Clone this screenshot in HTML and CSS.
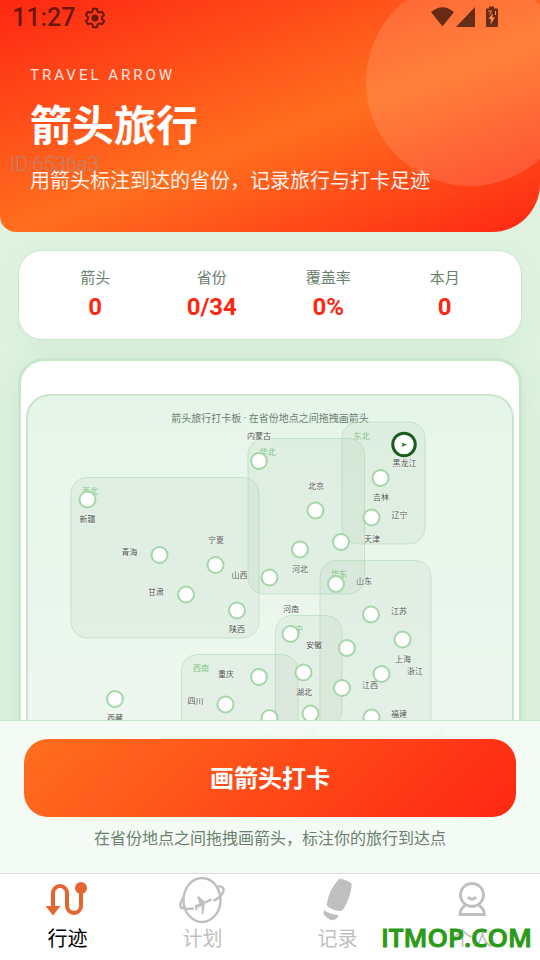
FILE: index.html
```html
<!DOCTYPE html>
<html lang="zh-CN">
<head>
<meta charset="utf-8">
<meta name="viewport" content="width=device-width, initial-scale=1">
<title>箭头旅行</title>
<link rel="stylesheet" href="styles.css">
</head>
<body>
<div class="app">
  <div class="status">
    <span class="clock">11:27</span>
    <svg class="gear" viewBox="0 0 24 24" width="24" height="24" aria-hidden="true"><path d="M10 2.800h4l.6 2.800 1.800 1 2.700-.9 2 3.400-2.100 1.900v2l2.100 1.900-2 3.400-2.700-.9-1.800 1-.6 2.800h-4l-.6-2.800-1.800-1-2.700.9-2-3.400L5 13v-2L2.900 9.100l2-3.400 2.700.9 1.800-1z" fill="none" stroke="currentColor" stroke-width="2" stroke-linejoin="round"/><circle cx="12" cy="12" r="3.500" fill="currentColor"/></svg>
    <svg class="signals" viewBox="0 0 70 22" width="70" height="22" aria-hidden="true"><path d="M0 5Q11.500-4.500 23 5L11.500 19.500z M44 0V20H25z" fill="currentColor"/><path d="M58-.5h5v2h3q1 0 1 1V19q0 1-1 1H56q-1 0-1-1V2.500q0-1 1-1h2z" fill="currentColor"/><path d="M61.500 6l-4 6h2.500l-.5 5.500 4.500-7h-2.500z" fill="#ff8a4a"/><path d="M57 4h3.500l-2 3.500M64.500 4v4" fill="none" stroke="#ff8a4a"/></svg>
  </div>
  <div class="device-id">ID:6536a3</div>

  <main class="scroll">
    <header class="hero">
      <div class="eyebrow">TRAVEL ARROW</div>
      <h1>箭头旅行</h1>
      <p>用箭头标注到达的省份，记录旅行与打卡足迹</p>
    </header>

    <dl class="stats">
      <div><dt>箭头</dt><dd>0</dd></div>
      <div><dt>省份</dt><dd>0/34</dd></div>
      <div><dt>覆盖率</dt><dd>0%</dd></div>
      <div><dt>本月</dt><dd>0</dd></div>
    </dl>

    <section class="map-card">
      <div class="board">
        <svg viewBox="28 396 484 520">
          <text class="caption" x="270" y="422">箭头旅行打卡板 · 在省份地点之间拖拽画箭头</text>
          <g class="regions">
            <rect x="71" y="477.500" width="188" height="160.500" rx="16"/>
            <rect x="248" y="438.500" width="116.500" height="155.500" rx="16"/>
            <rect x="342" y="422" width="83" height="122" rx="16"/>
            <rect x="320" y="560.500" width="111" height="200" rx="16"/>
            <rect x="275.500" y="615.500" width="66.500" height="111" rx="16"/>
            <rect x="181.500" y="654.500" width="116.500" height="140" rx="16"/>
          </g>
          <g class="region-names">
            <text x="90" y="494">西北</text><text x="267.500" y="455">华北</text><text x="361.500" y="439">东北</text>
            <text x="339" y="577">华东</text><text x="295" y="632">华中</text><text x="201" y="671">西南</text>
          </g>
          <g class="nodes">
            <circle cx="259" cy="461" r="8"/><circle cx="87.500" cy="499.500" r="8"/><circle cx="159.500" cy="555" r="8"/>
            <circle cx="215.500" cy="565" r="8"/><circle cx="186" cy="594.500" r="8"/><circle cx="237" cy="610.500" r="8"/>
            <circle cx="269.500" cy="577.500" r="8"/><circle cx="300" cy="549.500" r="8"/><circle cx="315.500" cy="510.500" r="8"/>
            <circle cx="341" cy="542" r="8"/><circle cx="371.500" cy="517.500" r="8"/><circle cx="380.500" cy="478" r="8"/>
            <circle cx="336" cy="584" r="8"/><circle cx="371" cy="614.500" r="8"/><circle cx="402.500" cy="639.500" r="8"/>
            <circle cx="381.500" cy="674" r="8"/><circle cx="347" cy="648" r="8"/><circle cx="290.500" cy="634" r="8"/>
            <circle cx="303.500" cy="672.500" r="8"/><circle cx="342" cy="688" r="8"/><circle cx="259" cy="677" r="8"/>
            <circle cx="225.500" cy="704.500" r="8"/><circle cx="115" cy="699" r="8"/><circle cx="269.500" cy="718" r="8"/>
            <circle cx="310.500" cy="713.500" r="8"/><circle cx="371.500" cy="717.500" r="8"/><circle cx="413" cy="738" r="8"/>
            <circle cx="340" cy="818" r="8"/><circle cx="305" cy="837" r="8"/>
          </g>
          <circle class="current" cx="404" cy="444.500" r="11.250"/>
          <path class="pointer" d="M401.500 442.500l5.500 2.200-5.500 2.200 1-2.200z"/>
          <g class="names">
            <text x="259" y="439">内蒙古</text><text x="87.500" y="522">新疆</text><text x="129.500" y="555">青海</text>
            <text x="216" y="543">宁夏</text><text x="156" y="595">甘肃</text><text x="237" y="632">陕西</text>
            <text x="239.500" y="578">山西</text><text x="300" y="572">河北</text><text x="316" y="489">北京</text>
            <text x="372" y="542">天津</text><text x="399.500" y="518">辽宁</text><text x="381" y="500">吉林</text>
            <text x="404.500" y="466">黑龙江</text><text x="364" y="584">山东</text><text x="399" y="614">江苏</text>
            <text x="403" y="662">上海</text><text x="415" y="674">浙江</text><text x="314" y="648">安徽</text>
            <text x="291" y="612">河南</text><text x="304" y="695">湖北</text><text x="370" y="688">江西</text>
            <text x="226" y="677">重庆</text><text x="195.500" y="704">四川</text><text x="115" y="721">西藏</text>
            <text x="270" y="740">贵州</text><text x="311" y="736">湖南</text><text x="399" y="717">福建</text>
            <text x="437" y="738">台湾</text>
          </g>
        </svg>
      </div>
    </section>
  </main>

  <section class="dock">
    <button type="button" class="draw">画箭头打卡</button>
    <p>在省份地点之间拖拽画箭头，标注你的旅行到达点</p>
  </section>

  <nav class="tabs">
    <a href="#track" class="active">
      <svg viewBox="0 0 48 48" width="48" height="48" aria-hidden="true"><path d="M9 30V17a7 7 0 0 1 14 0V30a7 7 0 0 0 14 0V10" fill="none" stroke="currentColor" stroke-width="4"/><circle cx="37" cy="12" r="6" fill="currentColor"/><path d="M1.500 30H16.500L9 39.500z" fill="currentColor"/></svg>
      <span>行迹</span>
    </a>
    <a href="#plan">
      <svg viewBox="0 0 48 48" width="48" height="48" aria-hidden="true"><g fill="none" stroke="currentColor" stroke-width="2.400"><ellipse cx="23" cy="24" rx="18.500" ry="22"/><path d="M5 21C1 26 0 31 3 32Q7 33.500 15 32.500M34.500 25Q42 21 44 16.500C46 11 42 9.500 38 11"/></g><path d="M17 29l4.500-1.500L19 21l2-.7 5.500 5.200 5-2.500q3-1 2.700.7-.3 1.200-2.500 2l-5 2L25.500 37.500l-2 .8.300-8.300-4.300 1.800-.3 2.500-1.500.5-1-5.300z" fill="currentColor" transform="translate(-1)"/></svg>
      <span>计划</span>
    </a>
    <a href="#notes">
      <svg viewBox="0 0 48 48" width="48" height="48" aria-hidden="true"><path d="M24.500 3.500Q25.500 2.500 27 2.800Q33 4 37 7Q38 8 37.500 11Q36 22 29.500 33Q28.500 35 26.500 35Q19 34.500 13.500 30.500Q12.500 29.500 13 27Q15 14 24.500 3.500zM10 34Q16 38.500 24.500 39L23 42Q20 45 16.500 44Q11.500 41.500 9.500 38z" fill="currentColor"/></svg>
      <span>记录</span>
    </a>
    <a href="#me">
      <svg viewBox="0 0 48 48" width="48" height="48" aria-hidden="true"><g fill="none" stroke="currentColor" stroke-width="2.800"><circle cx="23" cy="19" r="11.500"/><path d="M19 21q4 4.500 8 0"/><path d="M16 29.500Q11 33 11 38.500H35.500Q35.500 33 30 29.500"/></g></svg>
      <span>个人</span>
    </a>
    <div class="mark">ITMOP.COM</div>
  </nav>
</div>
</body>
</html>
```
FILE: styles.css
```css
* { box-sizing: border-box; }

body {
  margin: 0;
  font-family: Roboto, "Noto Sans CJK SC", sans-serif;
  background: #dff2e1;
}

.app {
  position: relative;
  display: grid;
  grid-template-rows: minmax(0, 1fr) auto;
  height: 100vh;
  overflow: hidden;
}

.status {
  position: absolute;
  z-index: 2;
  top: 0;
  left: 0;
  right: 0;
  display: flex;
  align-items: center;
  gap: 8px;
  height: 36px;
  padding: 0 39px 0 12px;
  color: rgba(30, 10, 5, .68);
}

.clock {
  font-size: 25px;
  line-height: 38px;
  font-weight: 500;
}

.signals {
  margin-left: auto;
  overflow: visible;
}

.device-id {
  position: absolute;
  z-index: 2;
  top: 152px;
  left: 10px;
  font-size: 20px;
  line-height: 24px;
  font-weight: 300;
  color: rgba(150, 150, 150, .7);
}

.scroll {
  grid-area: 1 / 1;
  overflow: hidden;
}

.hero {
  position: relative;
  overflow: hidden;
  padding: 64px 30px 35px;
  border-radius: 0 0 48px 16px;
  color: #fff;
  background: linear-gradient(160deg, #fe2712 0%, #ff6f1e 55%, #fe2712 100%);
}

.hero::after {
  content: "";
  position: absolute;
  top: -22px;
  right: -34px;
  width: 208px;
  height: 208px;
  border-radius: 50%;
  background: rgba(255, 255, 255, .13);
}

.eyebrow {
  font-size: 15px;
  line-height: 22px;
  letter-spacing: 3px;
  opacity: .85;
}

.hero h1 {
  margin: 10px 0 7px;
  font-size: 42px;
  line-height: 62px;
  font-weight: 700;
}

.hero p {
  margin: 0;
  font-size: 20px;
  line-height: 32px;
  opacity: .9;
}

.stats {
  display: grid;
  grid-template-columns: repeat(4, 1fr);
  margin: 18px 18px;
  padding: 15px 18px;
  border: 1px solid #c8e6c9;
  border-radius: 24px;
  background: #fff;
  text-align: center;
  box-shadow: 0 8px 24px rgba(76, 175, 80, .06);
}

.stats dt {
  font-size: 15px;
  line-height: 24px;
  color: #6b806d;
}

.stats dd {
  margin: 0;
  font-size: 24px;
  line-height: 34px;
  font-weight: 700;
  color: #fe2712;
}

.map-card {
  margin: 0 18px;
  padding: 33px 5px;
  border: 3px solid #c8e6c9;
  border-radius: 26px;
  background: #fff;
  box-shadow: 0 8px 32px rgba(76, 145, 80, .12);
}

.board {
  border: 2px solid #c8e6c9;
  border-radius: 24px;
  background: linear-gradient(#e6f5e9, #f1f8f2);
}

.board svg {
  display: block;
  width: 100%;
}

.board text {
  font-size: 8px;
  text-anchor: middle;
}

.board .caption {
  font-size: 10px;
  fill: #6b806d;
}

.regions rect {
  fill: rgba(90, 140, 90, .06);
  stroke: rgba(165, 214, 167, .5);
  stroke-width: 1;
}

.region-names { fill: #81c784; }

.nodes circle {
  fill: #fff;
  stroke: #a5d6a7;
  stroke-width: 2;
}

.current {
  fill: #fff;
  stroke: #1b5e20;
  stroke-width: 3;
}

.pointer { fill: #2e7d32; }

.names {
  fill: #4a544c;
  stroke: rgba(255, 255, 255, .7);
  stroke-width: 1;
  paint-order: stroke;
}

.dock {
  grid-area: 1 / 1;
  align-self: end;
  z-index: 1;
  padding: 18px 24px 20px;
  border-top: 1px solid #c8e6c9;
  background: rgba(244, 251, 245, .96);
  text-align: center;
}

.draw {
  display: block;
  width: 100%;
  padding: 22px 20px 20px;
  border: 0;
  border-radius: 24px;
  background: linear-gradient(135deg, #ff6f1e, #fe2712);
  color: #fff;
  font: 700 24px/36px Roboto, "Noto Sans CJK SC", sans-serif;
}

.dock p {
  margin: 8px 0 0;
  font-size: 16px;
  line-height: 28px;
  color: #6b806d;
}

.tabs {
  position: relative;
  z-index: 1;
  display: grid;
  grid-template-columns: repeat(4, 1fr);
  border-top: 1px solid #d9dcd9;
  background: #fff;
}

.tabs a {
  display: flex;
  flex-direction: column;
  align-items: center;
  padding: 2px 0 6px;
  font-size: 20px;
  line-height: 30px;
  color: #bfbfbf;
  text-decoration: none;
}

.tabs .active { color: #000; }
.tabs .active svg { color: #e4652f; }

.mark {
  position: absolute;
  right: 8px;
  bottom: 5px;
  font: 600 26px/36px "Open Sans", sans-serif;
  color: #2b9a18;
  -webkit-text-stroke: 1px #2b9a18;
}
```
